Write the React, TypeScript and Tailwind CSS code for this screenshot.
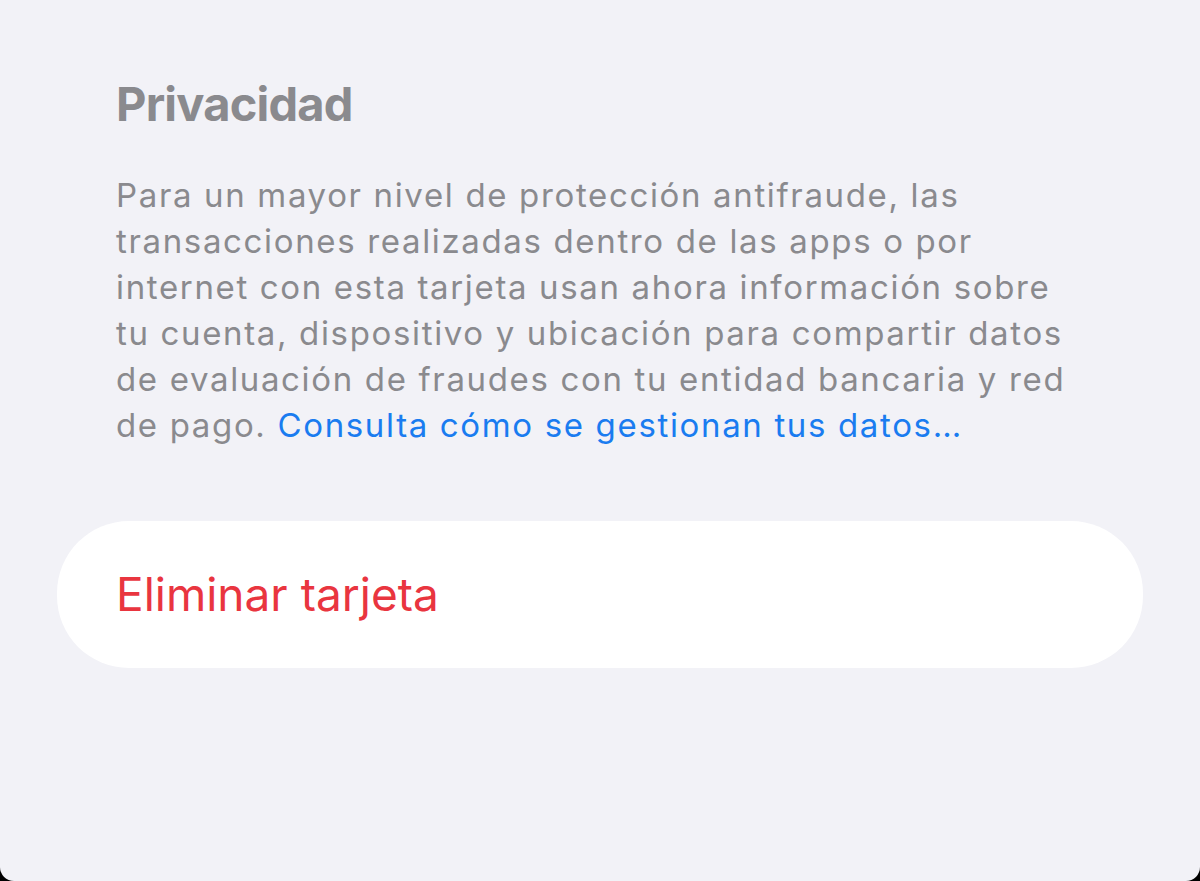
import React from "react";

const lines = [
  "Para un mayor nivel de protección antifraude, las",
  "transacciones realizadas dentro de las apps o por",
  "internet con esta tarjeta usan ahora información sobre",
  "tu cuenta, dispositivo y ubicación para compartir datos",
  "de evaluación de fraudes con tu entidad bancaria y red",
];

export default function App() {
  return (
    <div className="h-[881px] w-[1200px] bg-black">
      <div
        className="h-full w-full rounded-b-[14px] bg-[#f2f2f7] pt-[74px]"
        style={{ fontFamily: "Inter, 'Noto Sans', sans-serif" }}
      >
        {/* Section header */}
        <h2 className="pl-[116px] text-[47px] font-bold leading-[60px] tracking-[-0.8px] text-[#8a8a8e]">
          Privacidad
        </h2>

        {/* Footer text */}
        <p className="mt-[38px] pl-[116px] text-[33px] leading-[46px] tracking-[1.65px] text-[#8a8a8e]">
          {lines.map((l) => (
            <span key={l} className="block whitespace-nowrap">
              {l}
            </span>
          ))}
          <span className="block whitespace-nowrap">
            de pago. <span className="text-[#1a7cf0]">Consulta cómo se gestionan tus datos…</span>
          </span>
        </p>

        {/* Delete card */}
        <div className="mx-[57px] mt-[73px] flex h-[147px] items-center rounded-[72px] bg-white pl-[59px]">
          <span className="text-[46px] text-[#e9353f]">Eliminar tarjeta</span>
        </div>
      </div>
    </div>
  );
}
